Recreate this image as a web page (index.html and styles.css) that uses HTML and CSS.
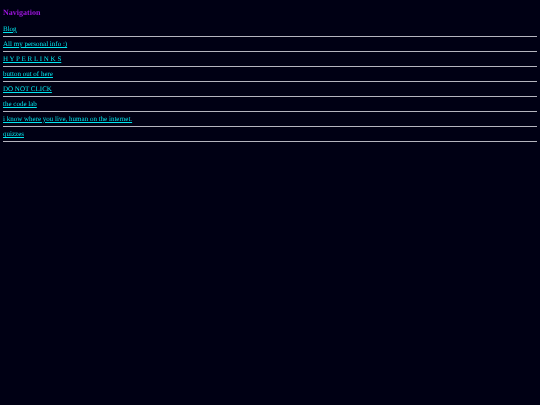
FILE: index.html
```html
<!DOCTYPE html>
<html lang="en">
<head>
<meta charset="UTF-8" />
<meta name="viewport" content="width=device-width, initial-scale=1.0" />
<title>Navigation</title>
<link rel="stylesheet" href="styles.css">
</head>
<body>

<h3>Navigation</h3>

<nav>
  <a href="blog.html">Blog</a>
  <hr>
  <a href="info.html">All my personal info :)</a>
  <hr>
  <a href="links.html">H Y P E R L I N K S</a>
  <hr>
  <a href="button.html">button out of here</a>
  <hr>
  <a href="donotclick.html">DO NOT CLICK</a>
  <hr>
  <a href="codelab.html">the code lab</a>
  <hr>
  <a href="human.html">i know where you live, human on the internet.</a>
  <hr>
  <a href="quizzes.html">quizzes</a>
  <hr>
</nav>

</body>
</html>
```
FILE: styles.css
```css
body {
  margin: 8px 3px;
  background-color: #000014;
  font-family: "Liberation Serif", "Times New Roman", serif;
  font-size: 7px;
  line-height: 8px;
  text-rendering: geometricPrecision;
}
h3, nav {
  will-change: opacity;
}
h3 {
  margin: 0 0 8px;
  font-size: 8px;
  line-height: 9px;
  color: #9b14dc;
}
a {
  color: #00e5ee;
}
hr {
  margin: 3px 0;
  border: 0;
  border-top: 1px solid #b4b4be;
}
```
